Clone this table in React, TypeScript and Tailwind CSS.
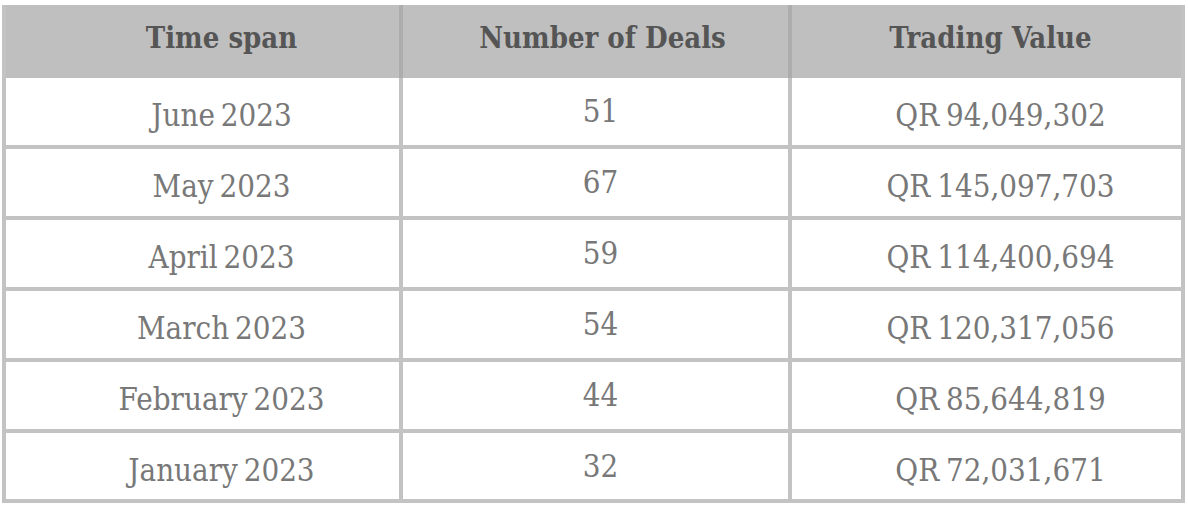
import React from "react";

const rows = [
  ["June 2023", "51", "QR 94,049,302"],
  ["May 2023", "67", "QR 145,097,703"],
  ["April 2023", "59", "QR 114,400,694"],
  ["March 2023", "54", "QR 120,317,056"],
  ["February 2023", "44", "QR 85,644,819"],
  ["January 2023", "32", "QR 72,031,671"],
];

const font = { fontFamily: '"DejaVu Serif", serif' };

export default function App() {
  return (
    <div className="bg-white w-[1188px] h-[508px] pt-[5px] pl-[2px]">
      <div className="w-[1183px] bg-[#c3c3c3] px-[4px] pb-[4px] flex flex-col" style={font}>
        <div className="grid grid-cols-[393px_385px_389px] gap-[4px] bg-[#adadad] h-[73px] -mx-[4px] px-[4px] bg-clip-content">
          <div className="bg-[#bfbfbf] flex items-center justify-center pl-[38px] pb-[6px] text-[29px] font-bold text-[#555555] font-stretch-condensed">
            Time span
          </div>
          <div className="bg-[#bfbfbf] flex items-center justify-center pl-[14px] pb-[6px] text-[29px] font-bold text-[#555555] font-stretch-condensed">
            Number of Deals
          </div>
          <div className="bg-[#bfbfbf] flex items-center justify-center pl-[8px] pb-[6px] text-[29px] font-bold text-[#555555] font-stretch-condensed">
            Trading Value
          </div>
        </div>
        <div className="flex flex-col gap-[4px]">
          {rows.map((r, i) => (
            <div key={i} className={`grid grid-cols-[393px_385px_389px] gap-[4px] ${i === 5 ? "h-[66px]" : "h-[67px]"}`}>
              <div className="bg-white flex items-center justify-center pl-[38px] pt-[8px] text-[31px] text-[#787878] font-stretch-condensed [word-spacing:-3px]">
                {r[0]}
              </div>
              <div className="bg-white flex items-center justify-center pl-[10px] text-[31px] text-[#787878] font-stretch-condensed">
                {r[1]}
              </div>
              <div className="bg-white flex items-center justify-center pl-[28px] pt-[8px] text-[31px] text-[#787878] font-stretch-condensed [word-spacing:-2px]">
                {r[2]}
              </div>
            </div>
          ))}
        </div>
      </div>
    </div>
  );
}
